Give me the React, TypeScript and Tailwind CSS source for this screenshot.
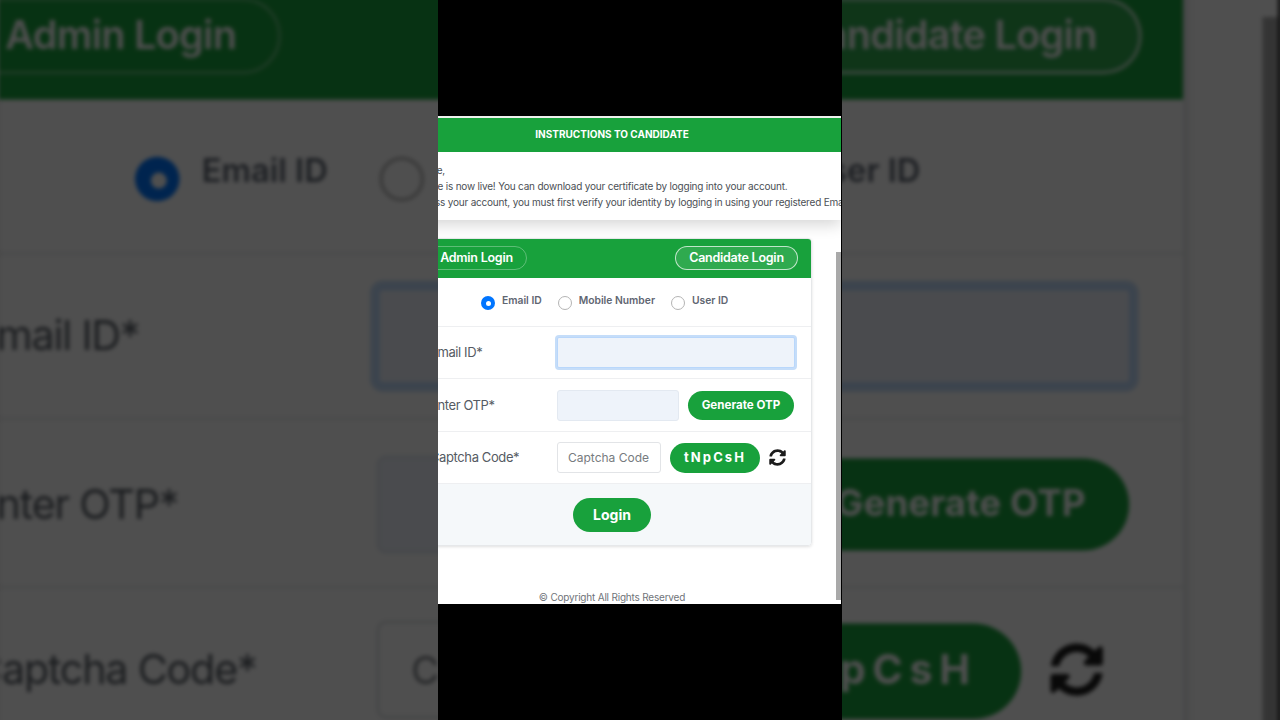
import { FaSyncAlt } from 'react-icons/fa'

const GREEN = 'bg-[#18a13c]'

function Radio({ label, checked }: { label: string; checked?: boolean }) {
  return (
    <div className="flex items-start gap-[7px]">
      {checked ? (
        <span className="mt-[4px] flex h-[14px] w-[14px] items-center justify-center rounded-full bg-[#0075ff]">
          <span className="h-[5px] w-[5px] rounded-full bg-white" />
        </span>
      ) : (
        <span className="mt-[4px] h-[14px] w-[14px] rounded-full border border-[#b4b4b4] bg-white" />
      )}
      <span className="text-[10.3px] leading-[16px] font-semibold text-[#5f6672]">{label}</span>
    </div>
  )
}

function FormRow({ label, children, className }: { label: string; children: React.ReactNode; className: string }) {
  return (
    <div className={`flex items-center border-b border-[#eeeff1] pl-[17px] pr-[16px] ${className}`}>
      <label className="w-[127px] shrink-0 pt-[1px] text-[13px] tracking-[-0.03em] text-[#555b63]">{label}</label>
      <div className="flex flex-1 items-center">{children}</div>
    </div>
  )
}

function Screen() {
  return (
    <div className="relative h-[488px] w-[403px] overflow-hidden bg-white [font-family:Inter,'Noto_Sans',sans-serif]">
      <div className="-ml-[55px] w-[458px]">
        {/* Instructions */}
        <div className="relative z-10 shadow-[0_5px_14px_rgba(0,0,0,0.16)]">
          <div className={`border-t-2 border-[#eef1ee] ${GREEN} flex h-[36px] items-center justify-center pb-[2px] text-[10px] font-bold text-white`}>
            INSTRUCTIONS TO CANDIDATE
          </div>
          <div className="h-[68px] overflow-hidden whitespace-nowrap bg-white pl-[13px] pt-[11px] text-[10px] leading-[15.5px] tracking-[-0.02em] text-[#4b4f55]">
            <p>Candidate,</p>
            <p>Certificate is now live! You can download your certificate by logging into your account.</p>
            <p className="ml-[3px] pt-[1px]">To access your account, you must first verify your identity by logging in using your registered Email ID.</p>
          </div>
        </div>

        <div className="px-[29px] pt-[18px]">
          <div className="w-[400px] overflow-hidden rounded-[4px] border border-[#e6e8ea] shadow-[0_1px_3px_rgba(0,0,0,0.12)]">
            {/* Tabs */}
            <div className={`flex h-[39px] items-center justify-between ${GREEN} px-[13px] pb-[2px]`}>
              <button className="h-[24px] w-[101px] rounded-full border border-white/30 pt-[2px] text-[12.5px] font-semibold tracking-[-0.02em] text-white">
                Admin Login
              </button>
              <button className="h-[24px] w-[123px] rounded-full border border-white/70 bg-white/10 pt-[2px] text-[12.5px] font-semibold tracking-[-0.02em] text-white">
                Candidate Login
              </button>
            </div>

            <div className="flex h-[49px] items-start gap-[16px] border-b border-[#eeeff1] pl-[68px] pt-[14px]">
              <Radio label="Email ID" checked />
              <Radio label="Mobile Number" />
              <Radio label="User ID" />
            </div>

            <FormRow label="Email ID*" className="h-[52px]">
              <input className="h-[31px] w-[238px] rounded-[2px] border border-[#b9d7fb] bg-[#eef3fa] outline-none ring-2 ring-[#c5ddf9]" />
            </FormRow>

            <FormRow label="Enter OTP*" className="h-[53px]">
              <input className="h-[31px] w-[122px] rounded-[3px] border border-[#e3e9f1] bg-[#eef3fa] outline-none" />
              <button className={`ml-[9px] h-[29px] w-[106px] rounded-full ${GREEN} text-[11.6px] leading-[29px] font-bold text-white`}>
                Generate OTP
              </button>
            </FormRow>

            <FormRow label="Captcha Code*" className="h-[52px]">
              <input
                placeholder="Captcha Code"
                className="h-[31px] w-[104px] rounded-[3px] border border-[#e2e4e7] bg-white px-[10px] text-[12px] outline-none placeholder:text-[#777b80]"
              />
              <div className={`ml-[9px] flex h-[30px] w-[90px] items-center justify-center rounded-full ${GREEN} text-[13px] font-bold tracking-[0.16em] text-white`}>
                tNpCsH
              </div>
              <FaSyncAlt className="ml-[9px] text-[17px] text-[#1c1c1c]" />
            </FormRow>

            <div className="flex h-[61px] items-center justify-center bg-[#f5f8fa]">
              <button className={`h-[34px] w-[78px] rounded-full ${GREEN} text-[14px] font-bold text-white`}>Login</button>
            </div>
          </div>

          <p className="mt-[44px] text-center text-[10px] leading-[14px] tracking-[-0.02em] text-[#707479]">© Copyright All Rights Reserved</p>
        </div>
      </div>

      {/* Scrollbar */}
      <div className="absolute right-0 top-[136px] h-[348px] w-[5px] bg-[#a9a9a9]" />
    </div>
  )
}

function Phone() {
  return (
    <div className="h-[720px] w-[404px] bg-black pt-[116px]">
      <Screen />
    </div>
  )
}

export default function App() {
  return (
    <div className="relative flex h-[720px] w-[1280px] justify-center overflow-hidden bg-[#4f4f4f]">
      {/* blurred, dimmed copy behind the video */}
      <div className="absolute inset-0 flex origin-center scale-[3.176] justify-center blur-[0.7px] brightness-[0.31]">
        <Phone />
      </div>
      <div className="relative">
        <Phone />
      </div>
    </div>
  )
}
